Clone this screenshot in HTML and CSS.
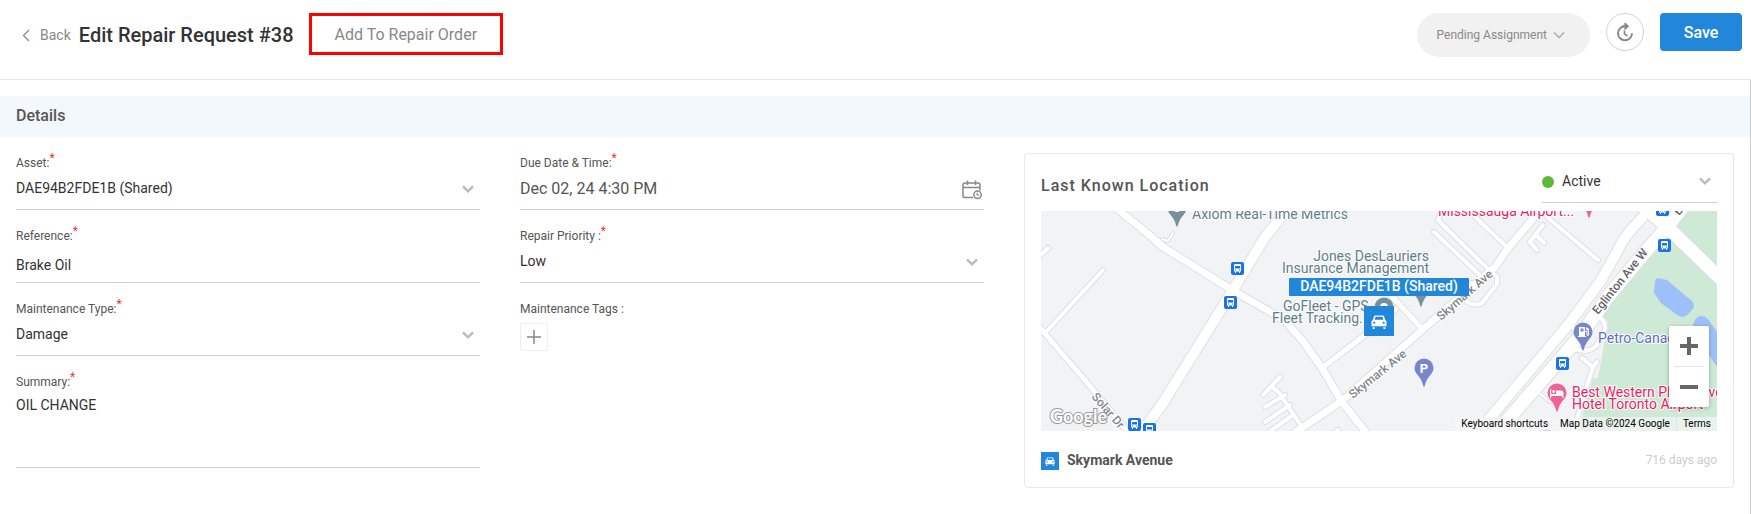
FILE: index.html
```html
<!DOCTYPE html>
<html lang="en">
<head>
  <meta charset="UTF-8">
  <meta name="viewport" content="width=device-width, initial-scale=1.0">
  <title>Edit Repair Request #38</title>
  <link rel="stylesheet" href="styles.css">
</head>
<body>
  <!-- Shared shapes -->
  <svg class="sprite" aria-hidden="true">
    <symbol id="chevron" viewBox="0 0 12 8">
      <path d="M1 1.3 L6 6.3 L11 1.3" fill="none" stroke="currentColor" stroke-width="2.4"/>
    </symbol>
    <symbol id="car" viewBox="0 0 16 14">
      <path fill="#fff" fill-rule="evenodd" d="M4.2 0.4h7.6q.9 0 1.2.9l1.2 3.6q1.3.5 1.3 2v4.4H.5V6.9q0-1.5 1.3-2L3 1.3q.3-.9 1.2-.9zM4.6 1.8L3.6 4.7h8.8l-1-2.9zM3.3 6.6a1.1 1.1 0 1 0 .01 0zM12.7 6.6a1.1 1.1 0 1 0 .01 0z"/>
      <path fill="#fff" d="M1.5 12.2h2.2v1a.8.8 0 0 1-.8.8h-.6a.8.8 0 0 1-.8-.8zM12.3 12.2h2.2v1a.8.8 0 0 1-.8.8h-.6a.8.8 0 0 1-.8-.8z"/>
    </symbol>
    <symbol id="bus" viewBox="0 0 13 13">
      <rect width="13" height="13" rx="2" fill="#1a73e8"/>
      <path fill="#fff" fill-rule="evenodd" d="M4 2h5q1 0 1 1v6.5H9V11H8V9.5H5V11H4V9.5H3V3q0-1 1-1zM4 4v2.500h5V4zM4 7.5v1h1v-1zM8 7.5v1h1v-1z"/>
    </symbol>
    <symbol id="pin" viewBox="0 0 20 30">
      <path d="M10 0.5a9.500 9.500 0 0 1 9.500 9.500c0 3.500-2 5.600-4.500 8.800-2 2.700-3.500 5.500-4.200 9q-.8 2-1.600 0C8.500 24.300 7 21.500 5 18.800 2.500 15.600.5 13.500.5 10A9.500 9.500 0 0 1 10 .5z"/>
    </symbol>
  </svg>

  <header class="page-header">
    <a class="back" href="#">
      <svg width="8" height="13" viewBox="0 0 8 13"><path d="M7 1 L1.5 6.5 L7 12" fill="none" stroke="currentColor" stroke-width="1.3"/></svg>
      Back
    </a>
    <h1>Edit Repair Request #38</h1>
    <button type="button" class="add-order">Add To Repair Order</button>
    <div class="actions">
      <button type="button" class="status-btn">
        Pending Assignment
        <svg width="12" height="8" viewBox="0 0 12 8"><path d="M1 1.5 L6 6.5 L11 1.5" fill="none" stroke="#aaa" stroke-width="1.5"/></svg>
      </button>
      <button type="button" class="history-btn" aria-label="History">
        <svg width="18" height="20" viewBox="0 0 18 20" fill="none" stroke="#888" stroke-width="2">
          <path d="M9 4.300a7 7 0 1 0 7 7"/>
          <path d="M6.500 4.300h5M8.500 1.200l3.200 3.100-3.200 3.100"/>
          <path d="M8.500 8.500v3.300l3 2.300" stroke-width="1.700"/>
        </svg>
      </button>
      <button type="button" class="save-btn">Save</button>
    </div>
  </header>

  <main>
    <h2 class="section-title">Details</h2>
    <form class="details">
      <div class="column">
        <div class="field">
          <label for="asset">Asset:<sup>*</sup></label>
          <div class="select">
            <select id="asset"><option>DAE94B2FDE1B (Shared)</option></select>
            <svg class="arrow"><use href="#chevron"/></svg>
          </div>
        </div>
        <div class="field">
          <label for="reference">Reference:<sup>*</sup></label>
          <input type="text" id="reference" value="Brake Oil">
        </div>
        <div class="field">
          <label for="type">Maintenance Type:<sup>*</sup></label>
          <div class="select">
            <select id="type"><option>Damage</option></select>
            <svg class="arrow"><use href="#chevron"/></svg>
          </div>
        </div>
        <div class="field">
          <label for="summary">Summary:<sup>*</sup></label>
          <textarea id="summary">OIL CHANGE</textarea>
        </div>
      </div>

      <div class="column">
        <div class="field">
          <label for="due">Due Date &amp; Time:<sup>*</sup></label>
          <div class="date">
            <input type="text" id="due" value="Dec 02, 24 4:30 PM">
            <svg width="20" height="20" viewBox="0 0 20 20" fill="none" stroke="#888" stroke-width="1.5">
              <path d="M11 17.500H3q-2 0-2-2V5q0-2 2-2h13q2 0 2 2v5.500M1 7.500h17M5.500 0.500v4.500M13.500 0.500v4.500"/>
              <circle cx="15.5" cy="14.8" r="3.7"/>
              <path d="M15.200 12.800v2.200h2" stroke-width="1.2"/>
            </svg>
          </div>
        </div>
        <div class="field">
          <label for="priority">Repair Priority :<sup>*</sup></label>
          <div class="select">
            <select id="priority"><option>Low</option></select>
            <svg class="arrow"><use href="#chevron"/></svg>
          </div>
        </div>
        <div class="field">
          <label for="add-tag">Maintenance Tags :</label>
          <button type="button" class="add-tag" id="add-tag">
            <svg width="14" height="14" viewBox="0 0 14 14"><path d="M7 0v14M0 7h14" stroke="#888" stroke-width="1.5"/></svg>
          </button>
        </div>
      </div>

      <section class="location">
        <div class="location-head">
          <h3>Last Known Location</h3>
          <div class="select state">
            <span class="dot"></span>
            <select aria-label="Asset status"><option>Active</option></select>
            <svg class="arrow"><use href="#chevron"/></svg>
          </div>
        </div>

        <div class="map">
          <svg class="map-canvas" viewBox="0 0 676 220" preserveAspectRatio="xMidYMid slice">
            <rect width="676" height="220" fill="#f1f3f4"/>
            <path fill="#ceead6" d="M644 0H676V220H536L541 206 552 167 557 167 567 111 561 104 576 81 592 67 622 27z"/>
            <path fill="#9dc0fa" d="M616 67L626 69 652 91Q654 96 651 99L645 105Q641 107 636 104L620 92 613 82 614 70zM659 105Q654 106 652 114L668 144 676 156V121L667 108Q663 104 659 105z"/>

            <!-- Road edges, then the same roads in white -->
            <g class="roads casing">
              <use href="#roads"/>
            </g>
            <g class="roads fill">
              <g id="roads">
                <path class="lane" d="M132 22L127 30 121 28M497 181L509 191"/>
                <path class="small" d="M222 184L239 166M232 177Q238 180 242 188L261 216M244 184L224 196M249 194L224 211M252 204L228 221M290 224L297 219M-2 46L7 37M62 59L4 122M402 -2L397 9 446 57 456 66 456 73 441 92Q434 96 426 91L424 80 430 72M393 21L443 68M432 4L467 37M502 14L489 31 496 39M495 24L503 32M502 -4L506 6 557 49M527 111L534 119M559 106Q565 112 564 119L556 134Q547 144 531 137M541 147L552 156 556 151M552 156L532 220"/>
                <path class="side" d="M-4 113L1 119 54 181 92 227M281 157L324 124 355 98M348 82L382 119"/>
                <path class="street-road" d="M74 -4L90 9 106 22 122 36 159 59 191 79 226 99 244 110 261 129 281 157 301 191 328 225M252 223L302 189 381 119 454 56 467 37 502 -4"/>
                <path class="main-road" d="M255 -12L242 4 224 26 192 79 122 192 98 225M601 7Q582 26 576 41L559 71 527 114 438 220"/>
                <path class="avenue" d="M645 -8L626 16 599 47 566 87 541 123 457 220M600 -6L622 12 684 72"/>
              </g>
            </g>

            <g class="street">
              <text x="312" y="188" transform="rotate(-39 312 188)">Skymark Ave</text>
              <text x="400" y="110" transform="rotate(-41 400 110)">Skymark Ave</text>
              <text class="major" x="557" y="104" transform="rotate(-51 557 104)">Eglinton Ave W</text>
              <text class="major" x="638" y="5" transform="rotate(-51 638 5)">Eglinton Ave W</text>
              <text x="50" y="186" transform="rotate(49 50 186)">Solar Dr</text>
            </g>

            <use href="#bus" x="190" y="51" width="13" height="13"/>
            <use href="#bus" x="183" y="85" width="13" height="13"/>
            <use href="#bus" x="87" y="207" width="13" height="13"/>
            <use href="#bus" x="102" y="212" width="13" height="13"/>
            <use href="#bus" x="615" y="-8" width="13" height="13"/>
            <use href="#bus" x="617" y="28" width="13" height="13"/>
            <use href="#bus" x="515" y="146" width="13" height="13"/>

            <g fill="#78909c">
              <use href="#pin" x="126" y="-13" width="20" height="30"/>
              <use href="#pin" x="370" y="67" width="20" height="30"/>
              <use href="#pin" x="333" y="86" width="20" height="30"/>
            </g>
            <circle cx="136" cy="-3" r="4" fill="#fff"/>
            <circle cx="343" cy="96" r="4" fill="#fff"/>
            <g fill="#7986cb">
              <use href="#pin" x="373" y="147" width="20" height="30"/>
              <use href="#pin" x="532" y="111" width="20" height="30"/>
            </g>
            <text class="parking" x="383" y="162">P</text>
            <path fill="#fff" fill-rule="evenodd" d="M538 116h6v9h1v1h-8v-1h1zM539.500 117.500v3h3v-3zM545 116l3 2v6q-1 2-2.500 0v-3H544v-1h2.500v4h.5v-4.500l-2-1z"/>
            <g fill="#f06292">
              <use href="#pin" x="506" y="172" width="20" height="30"/>
              <use href="#pin" x="538" y="-22" width="20" height="30"/>
              <use href="#pin" x="496" y="218" width="20" height="30"/>
            </g>
            <path fill="#fff" d="M509 178h1.200v5h5v-3.500h4.800q2.500 0 2.500 2.500v5h-1.200v-2h-11.100v2H509zM512.700 179a1.500 1.500 0 1 1-.01 0z"/>

            <g class="poi">
              <text x="151" y="8">Axiom Real-Time Metrics</text>
              <text x="388" y="50" text-anchor="end">Jones DesLauriers</text>
              <text x="388" y="62" text-anchor="end">Insurance Management</text>
              <text x="242" y="100">GoFleet - GPS</text>
              <text x="231" y="112">Fleet Tracking...</text>
            </g>
            <g class="poi hotel">
              <text x="397" y="5">Mississauga Airport...</text>
              <text x="531" y="186">Best Western Plus Travel</text>
              <text x="531" y="198">Hotel Toronto Airport</text>
            </g>
            <text class="poi fuel" x="557" y="132">Petro-Canada</text>

            <rect x="248" y="67" width="180" height="18" rx="1" fill="#2287da"/>
            <text class="asset-tag" x="338" y="80">DAE94B2FDE1B (Shared)</text>
            <rect x="323" y="95" width="30" height="30" fill="#2287da"/>
            <use href="#car" x="330" y="104" width="16" height="14"/>
            <text class="logo" x="9" y="212">Google</text>
          </svg>

          <div class="zoom">
            <button type="button" aria-label="Zoom in"><svg width="18" height="18" viewBox="0 0 18 18"><path d="M9 0v18M0 9h18" stroke="#666" stroke-width="4"/></svg></button>
            <button type="button" aria-label="Zoom out"><svg width="18" height="18" viewBox="0 0 18 18"><path d="M0 9h18" stroke="#666" stroke-width="4"/></svg></button>
          </div>
          <div class="map-legal">
            <button type="button">Keyboard shortcuts</button>
            <span>Map Data ©2024 Google</span>
            <a href="#">Terms</a>
          </div>
        </div>

        <div class="location-foot">
          <span class="car-badge"><svg width="10" height="9"><use href="#car"/></svg></span>
          <strong>Skymark Avenue</strong>
          <span class="ago">716 days ago</span>
        </div>
      </section>
    </form>
  </main>
</body>
</html>
```
FILE: styles.css
```css
* {
  box-sizing: border-box;
}

body {
  margin: 0;
  min-height: 100vh;
  display: flex;
  flex-direction: column;
  font-family: Roboto, 'Liberation Sans', sans-serif;
  font-size: 14px;
  color: #333;
  background: #fff;
}

button,
input,
select,
textarea {
  font: inherit;
  color: inherit;
}

button {
  padding: 0;
  border: none;
  background: none;
  cursor: pointer;
}

h1,
h2,
h3 {
  margin: 0;
  font-weight: 500;
}

.sprite {
  position: absolute;
  width: 0;
  height: 0;
}

/* Header */
.page-header {
  display: flex;
  align-items: flex-start;
  padding: 13px 9px 22px 22px;
  border-bottom: 1px solid #e4e4e4;
}

.back {
  display: flex;
  align-items: center;
  gap: 10px;
  height: 44px;
  margin-right: 8px;
  color: #888;
  text-decoration: none;
}

.page-header h1 {
  font-size: 20px;
  line-height: 44px;
}

.add-order {
  height: 42px;
  margin-left: 15px;
  padding: 0 23px;
  border: 3px solid #f00;
  font-size: 16px;
  color: #888;
}

.actions {
  display: flex;
  gap: 16px;
  margin-left: auto;
}

.status-btn {
  display: flex;
  align-items: center;
  gap: 6px;
  height: 44px;
  padding: 0 25px 0 20px;
  border-radius: 22px;
  background: #f1f1f1;
  font-size: 12px;
  color: #888;
}

.history-btn {
  display: flex;
  align-items: center;
  justify-content: center;
  width: 38px;
  height: 38px;
  border: 1px solid #d4d4d4;
  border-radius: 50%;
}

.save-btn {
  min-width: 82px;
  height: 38px;
  padding: 0 16px;
  border-radius: 4px;
  background: #2287da;
  font-size: 16px;
  font-weight: 500;
  color: #fff;
}

/* Details */
main {
  flex: 1;
  padding-top: 16px;
  border-right: 1px solid #ccc;
}

.section-title {
  padding: 0 16px 1px;
  background: #f3f8fd;
  font-size: 16px;
  line-height: 40px;
  color: #555;
}

.details {
  display: grid;
  grid-template-columns: 464fr 464fr 710fr;
  gap: 40px;
  align-items: start;
  padding: 16px;
}

.column {
  display: flex;
  flex-direction: column;
  gap: 18px;
  padding-top: 2px;
}

.field {
  display: flex;
  flex-direction: column;
}

.field label {
  font-size: 12px;
  line-height: 16px;
  color: #555;
}

.field sup {
  font-size: 12px;
  line-height: 0;
  color: #e53935;
}

.field input,
.field textarea,
.select select {
  width: 100%;
  height: 39px;
  margin: 0;
  border: none;
  border-bottom: 1px solid #d0d0d0;
  border-radius: 0;
  outline: none;
  background: transparent;
}

.field input {
  padding: 4px 0 0;
}

.field textarea {
  display: block;
  height: 78px;
  padding: 5px 0;
  line-height: 20px;
  resize: none;
}

.select,
.date {
  display: grid;
  align-items: center;
}

.select > *,
.date > * {
  grid-area: 1 / 1;
}

.select select {
  appearance: none;
  padding: 0 30px 4px 0;
}

.date .date-input,
.date input {
  padding: 0 30px 4px 0;
  font-size: 16px;
  color: #555;
}

.date svg {
  justify-self: end;
  margin-right: 2px;
  margin-bottom: 2px;
}

.arrow {
  justify-self: end;
  width: 12px;
  height: 8px;
  margin-right: 6px;
  margin-bottom: 4px;
  color: #bbb;
  pointer-events: none;
}

.add-tag {
  display: flex;
  align-items: center;
  justify-content: center;
  width: 28px;
  height: 28px;
  margin-top: 6px;
  border: 1px solid #eee;
  border-radius: 2px;
}

/* Location card */
.location {
  padding: 8px 16px 17px;
  border: 1px solid #e8e8e8;
  border-radius: 4px;
}

.location-head {
  display: flex;
  align-items: center;
  justify-content: space-between;
  margin-bottom: 8px;
}

.location-head h3 {
  padding-top: 5px;
  font-size: 16px;
  letter-spacing: 1px;
  color: #555;
}

.state {
  width: 175px;
}

.state select {
  height: 41px;
  padding-left: 20px;
  padding-bottom: 2px;
}

.dot {
  width: 12px;
  height: 12px;
  margin-bottom: 2px;
  border-radius: 50%;
  background: #5bba3b;
}

.map {
  position: relative;
  height: 220px;
  overflow: hidden;
}

.map-canvas {
  display: block;
  width: 100%;
  height: 100%;
}

.roads {
  fill: none;
  stroke-linecap: round;
  stroke-linejoin: round;
}

.casing {
  --edge: 2px;
  stroke: #dddfe3;
}

.fill {
  --edge: 0px;
  stroke: #fff;
}

.casing,
.fill {
  fill: none;
}

.lane { stroke-width: calc(2px + var(--edge)); }
.small { stroke-width: calc(4px + var(--edge)); }
.side { stroke-width: calc(5px + var(--edge)); }
.street-road { stroke-width: calc(7px + var(--edge)); }
.main-road { stroke-width: calc(10px + var(--edge)); }
.avenue { stroke-width: calc(13px + var(--edge)); }

.poi,
.street text {
  paint-order: stroke;
  stroke: #fff;
  stroke-width: 2px;
  stroke-linejoin: round;
}

.poi {
  font-size: 14px;
  fill: #607d8b;
}

.hotel {
  fill: #e91e63;
}

.fuel {
  fill: #5c6bc0;
}

.street text {
  font-size: 12px;
  font-weight: 500;
  fill: #80868b;
}

.street .major {
  fill: #5f6368;
}

.parking {
  font-size: 13px;
  font-weight: 700;
  text-anchor: middle;
  fill: #fff;
}

.asset-tag {
  font-size: 14px;
  font-weight: 500;
  text-anchor: middle;
  fill: #fff;
}

.logo {
  font-family: Lato, sans-serif;
  font-size: 18px;
  font-weight: 700;
  paint-order: stroke;
  stroke: #999;
  stroke-width: 2px;
  fill: #fff;
}

.zoom {
  position: absolute;
  right: 8px;
  bottom: 24px;
  width: 40px;
  padding: 0 5px;
  border-radius: 2px;
  background: #fff;
  box-shadow: 0 1px 4px rgba(0, 0, 0, 0.3);
}

.zoom button {
  display: flex;
  align-items: center;
  justify-content: center;
  width: 100%;
  height: 40px;
}

.zoom button + button {
  height: 41px;
  border-top: 1px solid #e6e6e6;
}

.map-legal {
  position: absolute;
  right: 0;
  bottom: 0;
  display: flex;
  background: rgba(245, 245, 245, 0.7);
  font-size: 10px;
  line-height: 14px;
  color: #000;
}

.map-legal > * {
  padding: 0 6px;
}

.map-legal a {
  border-left: 1px solid #dde5e0;
  color: inherit;
  text-decoration: none;
}

.location-foot {
  display: flex;
  align-items: center;
  gap: 8px;
  margin-top: 21px;
  line-height: 16px;
}

.car-badge {
  display: flex;
  align-items: center;
  justify-content: center;
  width: 18px;
  height: 18px;
  background: #2287da;
}

.location-foot strong {
  padding-bottom: 2px;
  font-size: 14px;
  color: #555;
}

.ago {
  margin-left: auto;
  padding-bottom: 2px;
  font-size: 12px;
  color: #ccc;
}
```
